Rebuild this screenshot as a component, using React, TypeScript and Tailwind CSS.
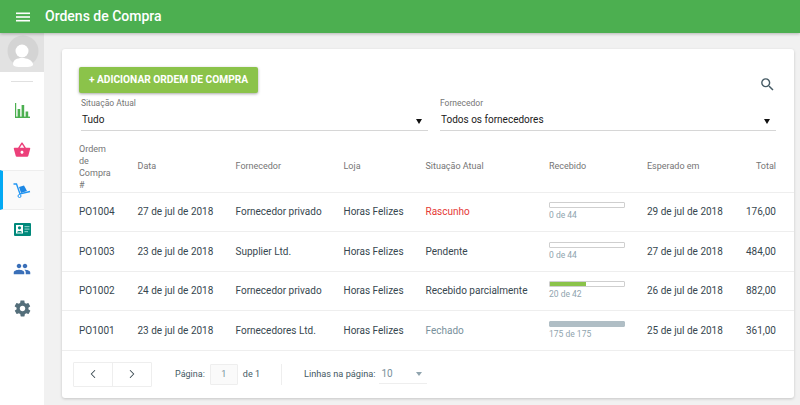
import { ChevronLeft, ChevronRight } from "lucide-react";

const rows = [
  { id: "PO1004", date: "27 de jul de 2018", vendor: "Fornecedor privado", status: "Rascunho", statusCls: "text-[#e53935]", rec: "0 de 44", pct: 0, bar: "", border: "border-[#cfcfcf]", due: "29 de jul de 2018", total: "176,00" },
  { id: "PO1003", date: "23 de jul de 2018", vendor: "Supplier Ltd.", status: "Pendente", statusCls: "text-[#37474f]", rec: "0 de 44", pct: 0, bar: "", border: "border-[#cfcfcf]", due: "27 de jul de 2018", total: "484,00" },
  { id: "PO1002", date: "24 de jul de 2018", vendor: "Fornecedor privado", status: "Recebido parcialmente", statusCls: "text-[#37474f]", rec: "20 de 42", pct: 48, bar: "bg-[#8bc34a]", border: "border-[#cfcfcf]", due: "26 de jul de 2018", total: "882,00" },
  { id: "PO1001", date: "23 de jul de 2018", vendor: "Fornecedores Ltd.", status: "Fechado", statusCls: "text-[#78909c]", rec: "175 de 175", pct: 100, bar: "bg-[#b0bec5]", border: "border-[#b0bec5]", due: "25 de jul de 2018", total: "361,00" },
];

function Dropdown({ label, value, className }: { label: string; value: string; className: string }) {
  return (
    <div className={className}>
      <div className="text-[8.5px] leading-[12px] text-[#757575]">{label}</div>
      <div className="flex h-[22px] items-center justify-between border-b border-[#d6d6d6] pl-[1px] pr-[6px] text-[10px] text-[#212121]">
        <span>{value}</span>
        <svg width="6" height="5" viewBox="0 0 6 5" className="mt-[4px]">
          <path d="M0 0h6L3 5z" fill="#111" />
        </svg>
      </div>
    </div>
  );
}

export default function App() {
  return (
    <div className="flex h-[405px] w-[800px] flex-col overflow-hidden bg-[#f1f1f1] font-['Roboto',sans-serif]">
      {/* Top bar */}
      <header className="z-10 flex h-[33px] shrink-0 items-center bg-[#4caf50] pl-[16px] shadow-[0_1px_3px_rgba(0,0,0,0.25)]">
        <svg width="14" height="10" viewBox="0 0 14 10" fill="#fff">
          <rect width="14" height="1.6" y="0.5" />
          <rect width="14" height="1.6" y="4.2" />
          <rect width="14" height="1.6" y="7.9" />
        </svg>
        <h1 className="ml-[15px] text-[14px] font-medium text-white">Ordens de Compra</h1>
      </header>

      <div className="flex min-h-0 flex-1">
        {/* Sidebar */}
        <aside className="flex w-[44px] shrink-0 flex-col items-center bg-white">
          <div className="h-[39px] w-full shrink-0 overflow-hidden bg-[#e2e2e2]">
            <svg viewBox="0 0 44 39" className="h-[39px] w-[44px]">
              <circle cx="23" cy="18" r="15.5" fill="#d4d4d4" />
              <circle cx="22" cy="18" r="6.5" fill="#fff" />
              <path d="M13 31c0-4 4-6 9-6s10 2 11 6c.5 2.500-3 3-10 3s-10-.5-10-3z" fill="#fff" />
            </svg>
          </div>
          <div className="mt-[9px] h-px w-[22px] shrink-0 bg-[#e0e0e0]" />
          <div className="mt-[9px] flex h-[39.6px] w-full items-center justify-center">
            <svg width="15" height="15" viewBox="0 0 15 15" fill="#4caf50">
              <rect x="0" y="0" width="1.2" height="15" />
              <rect x="0" y="13.6" width="15" height="1.4" />
              <rect x="2.6" y="6" width="2.6" height="8" />
              <rect x="6.6" y="2" width="2.6" height="12" />
              <rect x="10.6" y="8.5" width="2.6" height="5.5" />
            </svg>
          </div>
          <div className="flex h-[39.6px] w-full items-center justify-center">
            <svg width="18" height="18" viewBox="0 0 24 24" fill="#ec407a">
              <path d="M17.21 9l-4.38-6.56c-.19-.28-.51-.42-.83-.42-.32 0-.64.14-.83.43L6.79 9H2c-.55 0-1 .45-1 1 0 .09.01.18.04.27l2.54 9.27c.23.84 1 1.46 1.92 1.46h13c.92 0 1.69-.62 1.93-1.46l2.54-9.27L23 10c0-.55-.45-1-1-1h-4.79zM9 9l3-4.400L15 9H9zm3 8c-1.100 0-2-.9-2-2s.9-2 2-2 2 .9 2 2-.9 2-2 2z" />
            </svg>
          </div>
          <div className="flex h-[39.6px] w-full items-center justify-center border-y border-[#eeeeee] border-l-[3px] border-l-[#03a9f4] bg-[#fafafa] pr-[3px]">
            <svg width="18" height="16" viewBox="0 0 18 16">
              <path d="M0.5 2h3l3.500 10 10-2.500" fill="none" stroke="#2196f3" strokeWidth="1.4" />
              <path d="M6 5l5-1.500L14 9l-6 2z" fill="#1e88e5" />
              <circle cx="6.5" cy="14" r="1.5" fill="none" stroke="#2196f3" strokeWidth="1" />
            </svg>
          </div>
          <div className="flex h-[39.6px] w-full items-center justify-center">
            <svg width="17" height="13" viewBox="0 0 17 13">
              <rect width="17" height="13" rx="1" fill="#00897b" />
              <rect x="2" y="2" width="7" height="8.5" fill="#fff" />
              <circle cx="5.5" cy="4.8" r="1.6" fill="#00897b" />
              <path d="M3 9.5c0-2 5-2 5 0z" fill="#00897b" />
              <rect x="10.5" y="3" width="5" height="1.2" fill="#80cbc4" />
              <rect x="10.5" y="5.5" width="5" height="1.2" fill="#80cbc4" />
              <rect x="10.5" y="8" width="3.5" height="1.2" fill="#80cbc4" />
            </svg>
          </div>
          <div className="flex h-[39.6px] w-full items-center justify-center">
            <svg width="18" height="18" viewBox="0 0 24 24" fill="#3a6fb8">
              <path d="M16 11c1.66 0 2.99-1.34 2.99-3S17.66 5 16 5c-1.66 0-3 1.34-3 3s1.34 3 3 3zm-8 0c1.66 0 2.99-1.34 2.99-3S9.66 5 8 5C6.34 5 5 6.34 5 8s1.34 3 3 3zm0 2c-2.33 0-7 1.17-7 3.5V19h14v-2.5c0-2.33-4.67-3.5-7-3.5zm8 0c-.29 0-.62.02-.97.05 1.16.84 1.97 1.97 1.97 3.45V19h6v-2.5c0-2.33-4.67-3.5-7-3.5z" />
            </svg>
          </div>
          <div className="flex h-[39.6px] w-full items-center justify-center">
            <svg width="19" height="19" viewBox="0 0 24 24" fill="#546e7a">
              <path d="M19.4 13c.1-.3.1-.7.1-1s0-.7-.1-1l2.100-1.600c.2-.2.2-.4.1-.6l-2-3.500c-.1-.2-.4-.3-.6-.2l-2.500 1c-.5-.4-1.100-.7-1.700-1l-.4-2.600c0-.3-.2-.5-.5-.5h-4c-.3 0-.5.2-.5.4l-.4 2.700c-.6.2-1.100.6-1.700 1l-2.500-1c-.2-.1-.5 0-.6.2l-2 3.500c-.1.2-.1.5.1.6L4.600 11c-.1.3-.1.7-.1 1s0 .7.1 1l-2.100 1.600c-.2.2-.2.4-.1.6l2 3.500c.1.2.4.3.6.2l2.500-1c.5.4 1.100.7 1.700 1l.4 2.600c0 .3.2.5.5.5h4c.3 0 .5-.2.5-.4l.4-2.700c.6-.2 1.100-.6 1.700-1l2.500 1c.2.1.5 0 .6-.2l2-3.500c.1-.2.1-.5-.1-.6L19.400 13zM12 15.500c-1.900 0-3.500-1.600-3.500-3.500s1.600-3.500 3.500-3.500 3.500 1.600 3.500 3.500-1.600 3.500-3.500 3.500z" />
            </svg>
          </div>
        </aside>

        {/* Main */}
        <main className="min-w-0 flex-1 pb-[6px] pl-[18px] pr-[6px] pt-[16px]">
          <div className="flex h-[349px] flex-col rounded-[3px] bg-white pt-[18px] shadow-[0_1px_3px_rgba(0,0,0,0.18)]">
            <div className="relative flex h-[26px] shrink-0 pl-[17px] pr-[16px]">
              <button className="flex h-[26px] w-[179px] items-center justify-center rounded-[2px] bg-[#8bc34a] text-[10.2px] font-bold text-white shadow-[0_1px_3px_rgba(0,0,0,0.35)]">
                + ADICIONAR ORDEM DE COMPRA
              </button>
              <svg width="17" height="17" viewBox="0 0 24 24" fill="#455a64" className="absolute right-[18px] top-[9px]">
                <path d="M15.5 14h-.79l-.28-.27A6.471 6.471 0 0 0 16 9.5 6.5 6.5 0 1 0 9.5 16c1.61 0 3.09-.59 4.23-1.57l.27.28v.79l5 4.99L20.49 19l-4.99-5zm-6 0C7.01 14 5 11.99 5 9.5S7.01 5 9.5 5 14 7.01 14 9.5 11.99 14 9.5 14z" />
              </svg>
            </div>

            <div className="mt-[4px] flex shrink-0 gap-[12px] pl-[19px] pr-[18px]">
              <Dropdown label="Situação Atual" value="Tudo" className="w-[347px]" />
              <Dropdown label="Fornecedor" value="Todos os fornecedores" className="w-[336px]" />
            </div>

            <table className="mt-[11px] w-full table-fixed border-collapse text-[10px] text-[#37474f]">
              <colgroup>
                <col className="w-[75.5px]" />
                <col className="w-[98px]" />
                <col className="w-[108px]" />
                <col className="w-[82px]" />
                <col className="w-[123.5px]" />
                <col className="w-[98px]" />
                <col className="w-[94px]" />
                <col className="w-[53px]" />
              </colgroup>
              <thead>
                <tr className="h-[50px] border-b border-[#eeeeee] text-left text-[9px] text-[#757575]">
                  <th className="pl-[17px] font-normal leading-[12px]">
                    <div className="w-[35px]">Ordem de Compra #</div>
                  </th>
                  <th className="font-normal">Data</th>
                  <th className="font-normal">Fornecedor</th>
                  <th className="font-normal">Loja</th>
                  <th className="font-normal">Situação Atual</th>
                  <th className="font-normal">Recebido</th>
                  <th className="font-normal">Esperado em</th>
                  <th className="pr-[18px] text-right font-normal">Total</th>
                </tr>
              </thead>
              <tbody>
                {rows.map((r) => (
                  <tr key={r.id} className="h-[39.5px] border-b border-[#eeeeee]">
                    <td className="pl-[17px]">{r.id}</td>
                    <td>{r.date}</td>
                    <td>{r.vendor}</td>
                    <td>Horas Felizes</td>
                    <td className={r.statusCls}>{r.status}</td>
                    <td>
                      <div className={`h-[6px] w-[76px] overflow-hidden rounded-[1px] border bg-white ${r.border}`}>
                        <div className={`h-full ${r.bar}`} style={{ width: `${r.pct}%` }} />
                      </div>
                      <div className="mt-[2px] text-[8.5px] leading-[11px] text-[#90a4ae]">{r.rec}</div>
                    </td>
                    <td>{r.due}</td>
                    <td className="pr-[18px] text-right">{r.total}</td>
                  </tr>
                ))}
              </tbody>
            </table>

            {/* Pagination */}
            <div className="flex flex-1 items-center pl-[11px] text-[9px] text-[#455a64]">
              <div className="flex h-[25px] w-[79px] rounded-[1px] border border-[#eeeeee]">
                <button className="flex flex-1 items-center justify-center border-r border-[#eeeeee]">
                  <ChevronLeft className="h-[14px] w-[14px] text-[#37474f]" strokeWidth={1.75} />
                </button>
                <button className="flex flex-1 items-center justify-center">
                  <ChevronRight className="h-[14px] w-[14px] text-[#37474f]" strokeWidth={1.75} />
                </button>
              </div>
              <span className="ml-[23px]">Página:</span>
              <span className="ml-[5px] flex h-[21px] w-[28px] items-center justify-center rounded-[1px] border border-[#eeeeee] bg-[#fafafa] text-[#78909c]">1</span>
              <span className="ml-[5px]">de 1</span>
              <span className="ml-[21px] h-[21px] w-px bg-[#eeeeee]" />
              <span className="ml-[22px] text-[9.2px]">Linhas na página:</span>
              <div className="ml-[4px] flex h-[19px] w-[48px] items-center justify-between border-b border-[#eeeeee] pl-[2px] pr-[5px]">
                <span className="text-[10px] text-[#78909c]">10</span>
                <svg width="6" height="4" viewBox="0 0 6 4">
                  <path d="M0 0h6L3 4z" fill="#90a4ae" />
                </svg>
              </div>
            </div>
          </div>
        </main>
      </div>
    </div>
  );
}
